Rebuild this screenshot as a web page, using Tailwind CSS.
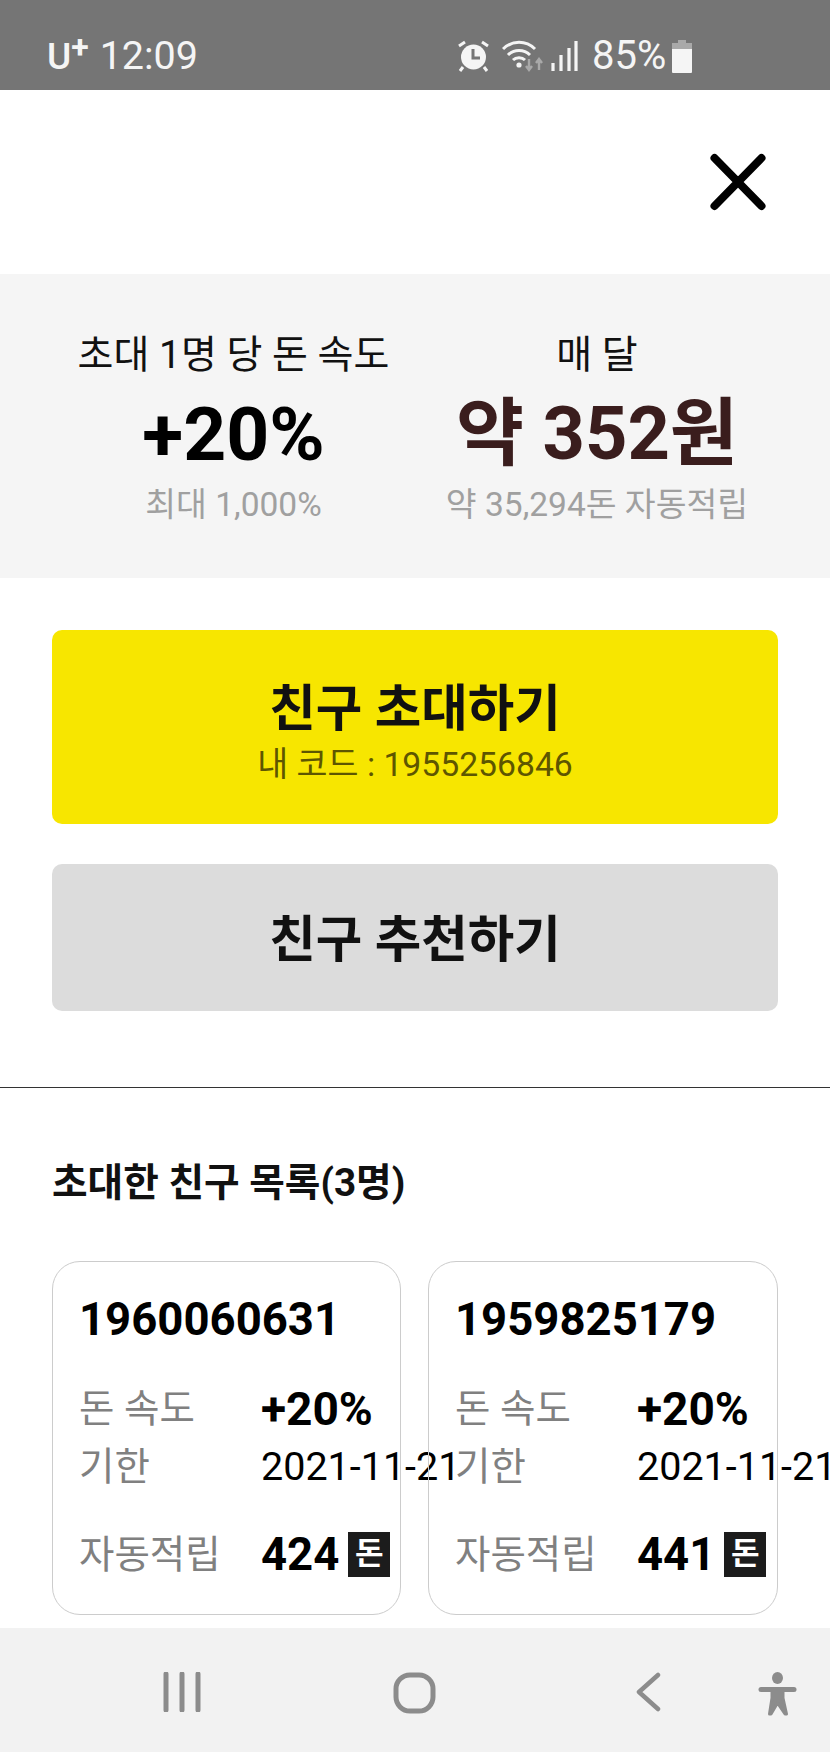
<!DOCTYPE html>
<html lang="ko">
<head>
    <meta charset="UTF-8">
    <meta name="viewport" content="width=device-width, initial-scale=1.0">
    <title>친구 초대</title>
    <script src="https://cdn.jsdelivr.net/npm/@tailwindcss/browser@4"></script>
</head>
<body class="bg-white font-['Roboto','Noto_Sans_CJK_KR',sans-serif]">
    <div class="w-[830px] h-[1752px] flex flex-col overflow-hidden">
        <!-- Status bar -->
        <div class="h-[90px] shrink-0 bg-[#757575] text-[#f5f5f5] flex items-center pt-[22px]">
            <div class="ml-[47px] flex items-center w-[410px]">
                <span class="text-[37px] leading-none font-medium">U</span>
                <span class="text-[32px] leading-none font-bold -mt-[18px] mr-[11px]">+</span>
                <span class="text-[39.5px] leading-none">12:09</span>
            </div>
            <svg class="w-[33px] h-[32px]" viewBox="0 0 33 32">
                <circle cx="16.5" cy="17" r="12.5" fill="#f5f5f5"/>
                <path d="M16 9v9h7" fill="none" stroke="#757575" stroke-width="3"/>
                <path d="M2 6l6-4M31 6l-6-4M6 27l-3 4M27 27l3 4" fill="none" stroke="#f5f5f5" stroke-width="3"/>
            </svg>
            <svg class="ml-[12px] w-[42px] h-[32px]" viewBox="0 0 42 32">
                <path d="M1 9c9-9 23-9 32 0M6 15c6-6 16-6 22 0M11 20c3-3 9-3 12 0" fill="none" stroke="#f5f5f5" stroke-width="3"/>
                <circle cx="17" cy="25" r="2.6" fill="#f5f5f5"/>
                <path d="M27 19v11M24 26l3 4 3-4M37 30V19M34 23l3-4 3 4" fill="none" stroke="#a9a9a9" stroke-width="2.4"/>
            </svg>
            <svg class="ml-[6px] w-[28px] h-[30px]" viewBox="0 0 28 30">
                <path d="M3 22v8M11 14v16M19 7v23M26 0v30" fill="none" stroke="#f5f5f5" stroke-width="3.2"/>
            </svg>
            <span class="ml-[14px] text-[40px] leading-none">85%</span>
            <svg class="ml-[5px] w-[22px] h-[33px]" viewBox="0 0 22 33">
                <path d="M7 0h8v3h6v6H1V3h6z" fill="#a9a9a9"/>
                <path d="M1 9h20v23a1 1 0 0 1-1 1H2a1 1 0 0 1-1-1z" fill="#f5f5f5"/>
            </svg>
        </div>

        <div class="flex-1 min-h-0 overflow-hidden">
            <!-- Close button -->
            <div class="h-[184px] flex items-center justify-end pr-[64px]">
                <svg class="w-[56px] h-[58px]" viewBox="0 0 56 58">
                    <path d="M4.500 5l47 48M51.500 5l-47 48" fill="none" stroke="#000" stroke-width="8" stroke-linecap="round"/>
                </svg>
            </div>

            <!-- Summary -->
            <div class="h-[304px] bg-[#f5f5f5] flex pt-[56px]">
                <div class="w-[467px] flex flex-col items-center">
                    <div class="text-[39px] leading-[50px] text-[#111]">초대 1명 당 돈 속도</div>
                    <div class="mt-[10px] text-[75px] leading-[88px] font-bold text-black">+20%</div>
                    <div class="text-[33.500px] leading-[44px] text-[#a0a0a0] mt-[5px]">최대 1,000%</div>
                </div>
                <div class="-ml-[53px] w-[366px] flex flex-col items-center">
                    <div class="text-[39px] leading-[50px] text-[#111]">매 달</div>
                    <div class="mt-[10px] text-[74px] leading-[88px] font-bold text-[#3a1d1d]">약 352원</div>
                    <div class="text-[33.500px] leading-[44px] text-[#a0a0a0] mt-[5px]">약 35,294돈 자동적립</div>
                </div>
            </div>

            <!-- Buttons -->
            <div class="px-[52px] pt-[52px] pb-[76px] border-b border-[#333] flex flex-col gap-[40px]">
                <div class="h-[194px] pt-[11px] rounded-[10px] bg-[#f7e600] flex flex-col items-center justify-center">
                    <div class="text-[50.500px] leading-[62px] font-bold text-[#111]">친구 초대하기</div>
                    <div class="mt-[2px] text-[33.700px] leading-[46px] text-[#5e5600]">내 코드 : 1955256846</div>
                </div>
                <div class="h-[147px] pt-[4px] rounded-[10px] bg-[#dcdcdc] flex items-center justify-center">
                    <div class="text-[50.500px] font-bold text-[#111]">친구 추천하기</div>
                </div>
            </div>

            <!-- Invited friends -->
            <div class="px-[52px] pt-[71px]">
                <div class="text-[38.700px] leading-[48px] font-bold text-[#111]">초대한 친구 목록(3명)</div>
                <div class="mt-[54px] grid grid-cols-[349px_350px] gap-[27px]">
                    <div class="h-[354px] rounded-[28px] border border-[#ccc] pl-[26px] pt-[28px]">
                        <div class="text-[45.500px] leading-[60px] font-bold text-black">1960060631</div>
                        <div class="mt-[30px] flex items-center h-[58px]">
                            <span class="w-[182px] shrink-0 text-[38.500px] text-[#808080]">돈 속도</span>
                            <span class="text-[46px] font-bold text-black">+20%</span>
                        </div>
                        <div class="flex items-center h-[58px]">
                            <span class="w-[182px] shrink-0 text-[38.500px] text-[#808080]">기한</span>
                            <span class="text-[39.500px] whitespace-nowrap text-black">2021-11-21</span>
                        </div>
                        <div class="mt-[30px] flex items-center h-[58px]">
                            <span class="w-[182px] shrink-0 text-[38.500px] text-[#808080]">자동적립</span>
                            <span class="text-[45.500px] font-bold text-black">424</span>
                            <span class="ml-[9px] -mt-[2px] w-[42px] h-[45px] flex items-center justify-center bg-[#1c1c1c] text-white text-[31px] font-bold">돈</span>
                        </div>
                    </div>
                    <div class="h-[354px] rounded-[28px] border border-[#ccc] pl-[26px] pt-[28px]">
                        <div class="text-[45.500px] leading-[60px] font-bold text-black">1959825179</div>
                        <div class="mt-[30px] flex items-center h-[58px]">
                            <span class="w-[182px] shrink-0 text-[38.500px] text-[#808080]">돈 속도</span>
                            <span class="text-[46px] font-bold text-black">+20%</span>
                        </div>
                        <div class="flex items-center h-[58px]">
                            <span class="w-[182px] shrink-0 text-[38.500px] text-[#808080]">기한</span>
                            <span class="text-[39.500px] whitespace-nowrap text-black">2021-11-21</span>
                        </div>
                        <div class="mt-[30px] flex items-center h-[58px]">
                            <span class="w-[182px] shrink-0 text-[38.500px] text-[#808080]">자동적립</span>
                            <span class="text-[45.500px] font-bold text-black">441</span>
                            <span class="ml-[9px] -mt-[2px] w-[42px] h-[45px] flex items-center justify-center bg-[#1c1c1c] text-white text-[31px] font-bold">돈</span>
                        </div>
                    </div>
                </div>
            </div>
        </div>

        <!-- Android nav bar -->
        <div class="h-[124px] shrink-0 bg-[#f2f2f2] flex items-start pt-[44px] pl-[163px]">
            <svg class="w-[38px] h-[40px]" viewBox="0 0 38 40">
                <path d="M3 2v36M19 2v36M35 2v36" fill="none" stroke="#8c8c8c" stroke-width="5" stroke-linecap="round"/>
            </svg>
            <svg class="ml-[192px] w-[43px] h-[42px]" viewBox="0 0 43 42">
                <rect x="3" y="3" width="37" height="36" rx="14" fill="none" stroke="#8c8c8c" stroke-width="5"/>
            </svg>
            <svg class="ml-[199px] w-[26px] h-[40px]" viewBox="0 0 26 40">
                <path d="M23 3L4 20l19 17" fill="none" stroke="#8c8c8c" stroke-width="4.5" stroke-linecap="round" stroke-linejoin="round"/>
            </svg>
            <svg class="ml-[97px] w-[40px] h-[46px]" viewBox="0 0 40 46">
                <ellipse cx="19.500" cy="6" rx="5.500" ry="6" fill="#8c8c8c"/>
                <path d="M3 17.500h33" fill="none" stroke="#8c8c8c" stroke-width="5" stroke-linecap="round"/>
                <path d="M14 18h11v8l3.500 16h-1.500L19.500 31 13 42h-1.500L14 26z" fill="#8c8c8c" stroke="#8c8c8c" stroke-width="3" stroke-linejoin="round"/>
            </svg>
        </div>
    </div>
</body>
</html>
